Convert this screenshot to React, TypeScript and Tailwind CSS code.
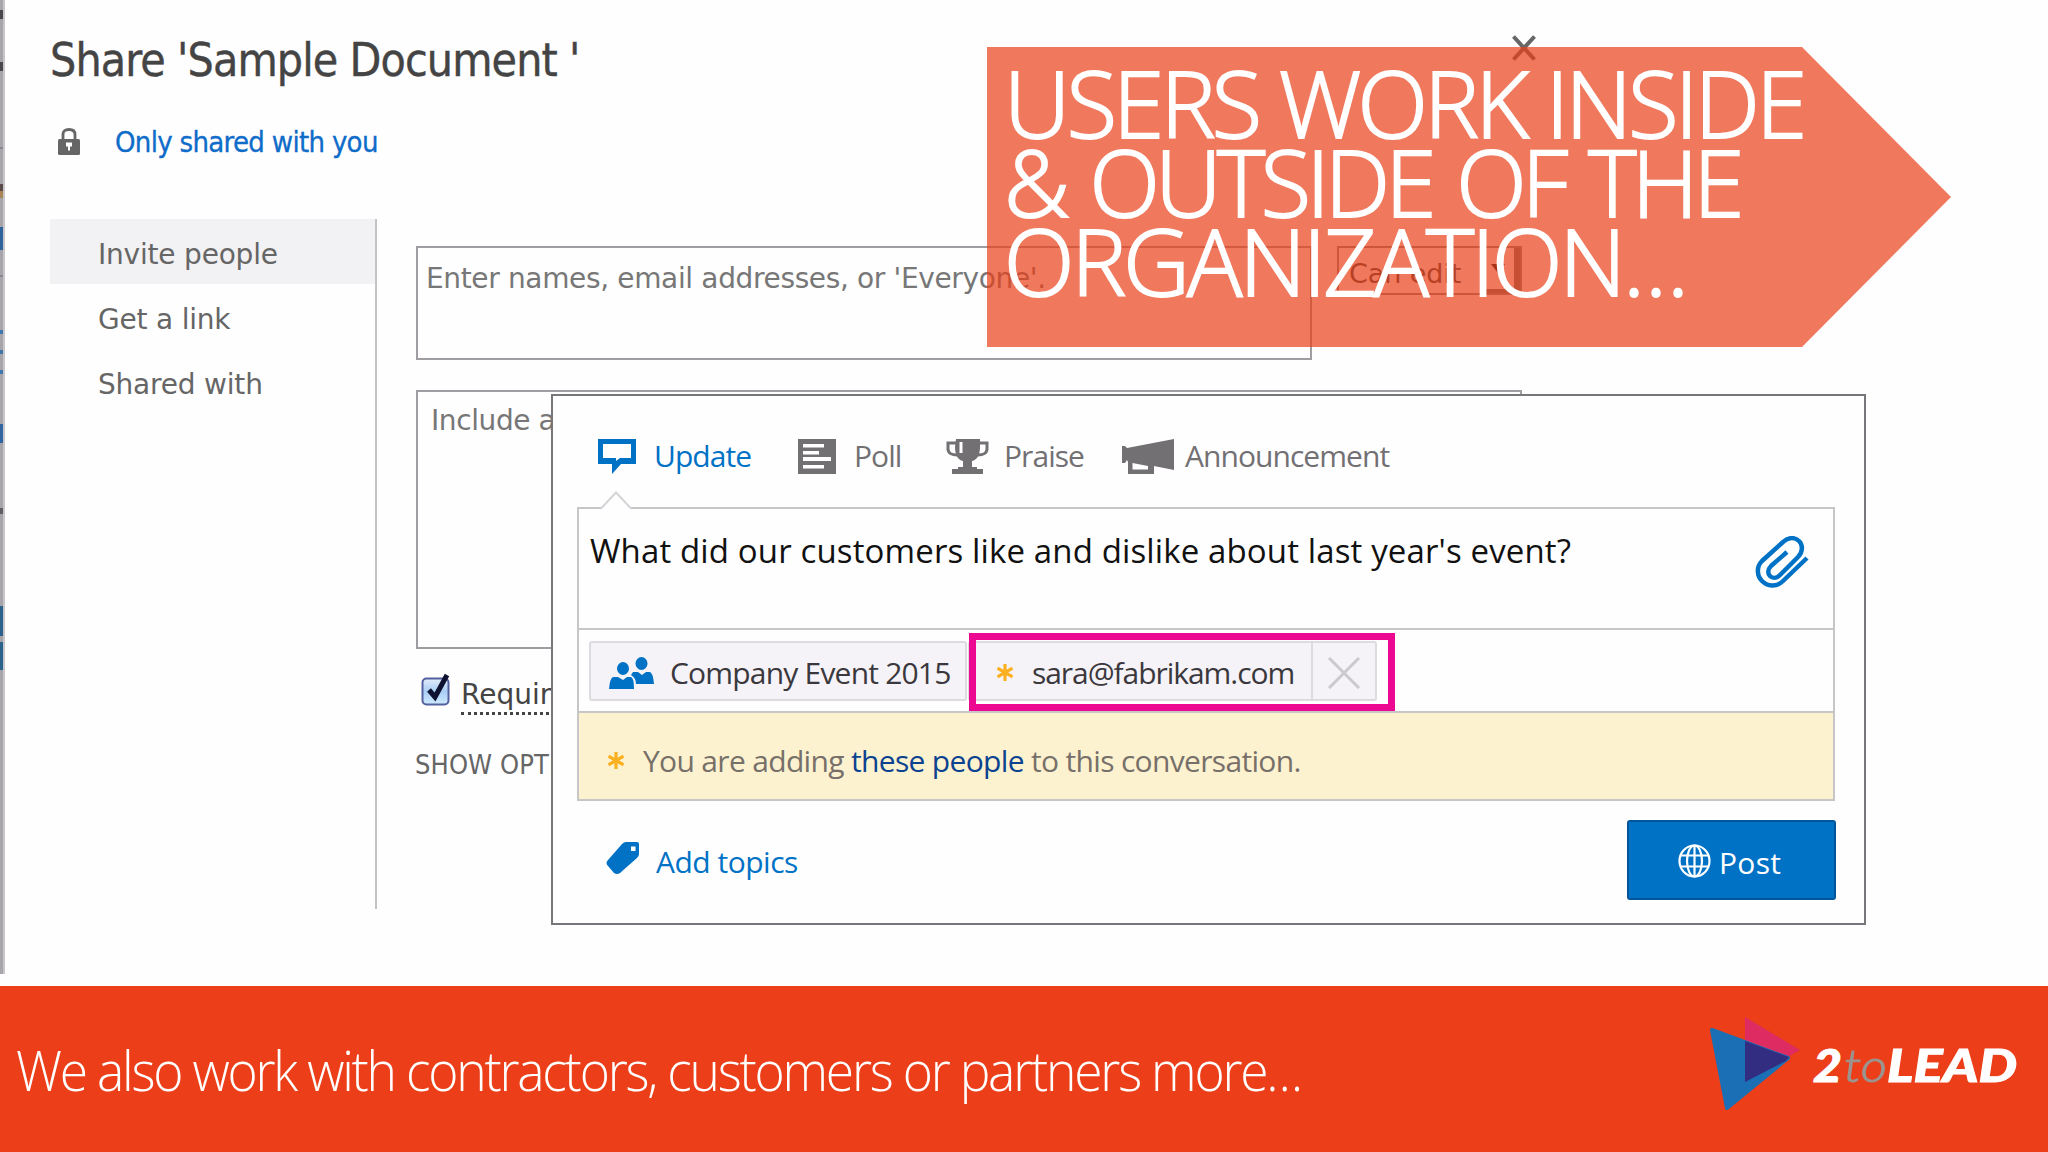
import React from 'react';

const SidebarItems = ['Invite people', 'Get a link', 'Shared with'];

const edgeMarks = [
  { y: 10, h: 9, color: '#4a474c' },
  { y: 62, h: 9, color: '#4a474c' },
  { y: 147, h: 2, color: '#8b8890' },
  { y: 184, h: 7, color: '#5c4a4a' },
  { y: 191, h: 7, color: '#a98454' },
  { y: 227, h: 23, color: '#2f639c' },
  { y: 275, h: 2, color: '#8b8890' },
  { y: 330, h: 4, color: '#3f77ad' },
  { y: 350, h: 4, color: '#3f77ad' },
  { y: 370, h: 4, color: '#3f77ad' },
  { y: 424, h: 19, color: '#2f66a0' },
  { y: 508, h: 6, color: '#605d63' },
  { y: 606, h: 30, color: '#2b628c' },
  { y: 642, h: 28, color: '#2b628c' },
];

const PageEdge = () => (
  <svg width="5" height="974" className="shrink-0">
    <rect width="3" height="974" fill="#a8a5aa" />
    <rect x="3" width="2" height="974" fill="#c9c6cb" />
    {edgeMarks.map((m) => (
      <rect key={m.y} y={m.y} width="3" height={m.h} fill={m.color} />
    ))}
  </svg>
);

const LockIcon = () => (
  <svg width="22" height="27" viewBox="0 0 22 27">
    <path d="M5 12V6.5Q5 1.5 11 1.5T17 6.5V12" fill="none" stroke="#666" strokeWidth="2.8" />
    <rect y="11" width="22" height="16" rx="1.5" fill="#666" />
    <path d="M8 14.5h6v4h-2v4h-2v-4H8z" fill="#fff" />
  </svg>
);

const CheckboxIcon = () => (
  <svg width="31" height="36" viewBox="0 0 31 36">
    <defs>
      <linearGradient id="check-fill" x1="0" y1="0" x2="0" y2="1">
        <stop offset="0" stopColor="#e3ecfb" />
        <stop offset="0.5" stopColor="#a9cdf5" />
        <stop offset="1" stopColor="#cfeaff" />
      </linearGradient>
    </defs>
    <rect x="1.5" y="6.5" width="26" height="26" rx="4" fill="url(#check-fill)" stroke="#5560a0" strokeWidth="2" />
    <path d="M8 18l6 7L26 3" fill="none" stroke="#0e1230" strokeWidth="5" />
  </svg>
);

const UpdateIcon = () => (
  <svg width="38" height="35" viewBox="0 0 38 35">
    <path d="M0 0h38v25H23L14 35V25H0zM5 5v14h13v3l4-3h11V5z" fill="#0072c6" fillRule="evenodd" />
  </svg>
);

const PollIcon = () => (
  <svg width="38" height="35" viewBox="0 0 38 35">
    <path d="M0 0h38v35H0z" fill="#737074" />
    <path d="M5 5h21v3.500H5zM5 12h16v3.500H5zM5 18h28v4H5zM5 26h21v3.500H5z" fill="#fff" />
  </svg>
);

const PraiseIcon = () => (
  <svg width="43" height="35" viewBox="0 0 43 35">
    <path d="M10 0h24v8c0 8-3 13-8 14v6h5v2h6v5H6v-5h6v-2h5v-6c-5-1-8-6-8-14z" fill="#737074" />
    <path d="M10 4H2v6c0 4 4 6 9 6M33 4h8v6c0 4-4 6-9 6" fill="none" stroke="#737074" strokeWidth="3" />
    <path d="M13.500 3h3v11h-3z" fill="#fff" />
  </svg>
);

const AnnouncementIcon = () => (
  <svg width="52" height="35" viewBox="0 0 52 35">
    <path d="M0 7h3l2 2L52 0v31l-20-4v8H6V23l-1-2-2 3H0zM10.500 24v6.500H26V27z" fill="#737074" fillRule="evenodd" />
  </svg>
);

const PaperclipIcon = () => (
  <svg width="54" height="52" viewBox="0 0 54 52" fill="none" stroke="#0072c6" strokeWidth="4.500">
    <path d="M52 22L28 45C21 52 12 50 7 45S1 31 7 25L28 6C33 1 40 1 44 5s4 11-1 16L25 39C21 43 17 42 15 40s-3-6 1-10L32 16" />
  </svg>
);

const PeopleIcon = () => (
  <svg width="46" height="32" viewBox="0 0 46 32" fill="#0072c6">
    <ellipse cx="32.500" cy="6.500" rx="6" ry="6.500" />
    <path d="M24 15h5l4 3 4-3h4q3 1 4 12H27q0-6-5-9z" />
    <ellipse cx="14" cy="11.500" rx="6" ry="6.500" />
    <path d="M4 20h5l5 3 4-3h4q3 1 3 12H0q1-11 4-12z" />
  </svg>
);

const StarIcon = () => (
  <svg width="16" height="17" viewBox="0 0 16 17">
    <path d="M8 0v17M0.500 4.200l15 8.600M0.500 12.800l15-8.600" stroke="#fbb11f" strokeWidth="3.200" />
  </svg>
);

const TagIcon = () => (
  <svg width="34" height="33" viewBox="0 0 34 33">
    <path d="M20 0h11q2 0 2 2v10q0 2-2 4L14 31q-3 2-6 0l-6-7q-3-3 0-6L16 2q2-2 4-2zM25 4.500v4.500h4.500V4.500z" fill="#0072c6" fillRule="evenodd" />
  </svg>
);

const GlobeIcon = () => (
  <svg width="33" height="34" viewBox="0 0 33 34" fill="none" stroke="#fff" strokeWidth="2.200">
    <ellipse cx="16.500" cy="17" rx="15" ry="15.500" />
    <ellipse cx="16.500" cy="17" rx="7.500" ry="15.500" />
    <path d="M16.500 1.500v31M3 11.500h27M3 22.500h27" />
  </svg>
);

const tabs = [
  { label: 'Update', icon: <UpdateIcon />, style: 'w-[200px] text-[#0072c6]', gap: 'ml-[18px]' },
  { label: 'Poll', icon: <PollIcon />, style: 'w-[148px] text-[#737074]', gap: 'ml-[18px]' },
  { label: 'Praise', icon: <PraiseIcon />, style: 'w-[176px] text-[#737074]', gap: 'ml-[15px]' },
  { label: 'Announcement', icon: <AnnouncementIcon />, style: 'text-[#737074]', gap: 'ml-[11px]' },
];

const ShareDialog = () => (
  <div className="flex grow flex-col pl-[45px] font-['DejaVu_Sans',sans-serif]">
    <div className="flex pt-[31px] font-['DejaVu_Sans_Condensed','DejaVu_Sans',sans-serif]">
      <h1 className="w-[1462px] text-[46px] leading-[59px] tracking-[-0.9px] text-[#444] [-webkit-text-stroke:0.4px_#444]">
        Share 'Sample Document '
      </h1>
      <svg width="24" height="26" viewBox="0 0 24 26" className="mt-[4px]">
        <path d="M1.500 1.500l21 23M22.500 1.500l-21 23" stroke="#666" strokeWidth="4" />
      </svg>
    </div>

    <div className="mt-[31px] flex h-10 items-center pl-[8px]">
      <LockIcon />
      <a className="ml-[35px] pt-px font-['DejaVu_Sans_Condensed','DejaVu_Sans',sans-serif] text-[29px] leading-[40px] tracking-[-0.7px] text-[#0f6cc9] [-webkit-text-stroke:0.3px_#0f6cc9]">
        Only shared with you
      </a>
    </div>

    <div className="mt-[58px] flex">
      <nav className="h-[690px] w-[327px] shrink-0 border-r-2 border-[#c6c3c8] text-[28px] tracking-[-0.2px] text-[#666]">
        {SidebarItems.map((item, index) => (
          <div key={item} className={`h-[65px] pl-[48px] leading-[71px] ${index === 0 ? 'bg-[#f2f1f3]' : ''}`}>
            {item}
          </div>
        ))}
      </nav>

      <div className="ml-[39px] pt-[27px] text-[28px] tracking-[-0.4px] text-[#777]">
        <div className="flex gap-[25px]">
          <div className="h-[114px] w-[896px] border-2 border-[#a09da2] pt-[11px] pl-[8px] leading-[40px] tracking-[-0.35px]">
            Enter names, email addresses, or 'Everyone'.
          </div>
          <div className="flex h-[49px] w-[185px] border-2 border-[#8a8a8a] text-[#444]">
            <span className="w-[142px] pl-[10px] text-[27px] leading-[52px] tracking-[-0.1px] whitespace-nowrap">Can edit</span>
            <span className="flex grow items-center justify-center border-r-[6px] border-b-4 border-[#777]">
              <svg width="14" height="9" className="shrink-0">
                <path d="M0 0h14L7 9z" fill="#111" />
              </svg>
            </span>
          </div>
        </div>

        <div className="mt-[30px] h-[259px] w-[1106px] border-2 border-[#a09da2] pt-[9px] pl-[13px] leading-[40px]">
          Include a personal message with this invitation.
        </div>

        <div className="mt-[23px] flex h-[41px] items-start pl-[5px] text-[#444]">
          <CheckboxIcon />
          <span className="mt-[6px] ml-[9px] border-b-[3px] border-dotted border-[#444] leading-[34px] tracking-[0px]">
            Require sign-in
          </span>
        </div>

        <div className="mt-[32px] -ml-px font-['DejaVu_Sans_Condensed','DejaVu_Sans',sans-serif] text-[27px] leading-[40px] tracking-[0.1px] text-[#666]">
          SHOW OPTIONS
        </div>
      </div>
    </div>
  </div>
);

const PostDialog = () => (
  <div className="absolute top-[394px] left-[551px] h-[531px] w-[1315px] border-2 border-[#79767b] bg-[#fefefe] pt-[43px] pr-[29px] pl-[24px] font-['Open_Sans','Noto_Sans',sans-serif] text-[30px] tracking-[-0.95px]">
    <div className="flex h-[35px] items-center pl-[21px]">
      {tabs.map((tab) => (
        <div key={tab.label} className={`flex items-center ${tab.style}`}>
          {tab.icon}
          <span className={`pb-px leading-[32px] ${tab.gap}`}>{tab.label}</span>
        </div>
      ))}
    </div>

    <div className="relative mt-[33px] border-2 border-[#c8c5c9]">
      {/* Pointer below the active tab */}
      <svg width="32" height="18" viewBox="0 0 32 18" className="absolute -top-[18px] left-[21px]">
        <path d="M1 17L16 1l15 16v1H1z" fill="#fefefe" />
        <path d="M1 17.500L16 1.500l15 16" fill="none" stroke="#d6d3d8" strokeWidth="2" />
      </svg>

      <div className="flex h-[121px] border-b-2 border-[#c8c5c9] pt-[20px] pr-[24px] pl-[11px]">
        <p className="grow text-[33px] leading-[44px] tracking-[0.13px] text-[#111]">
          What did our customers like and dislike about last year's event?
        </p>
        <div className="pt-[7px]">
          <PaperclipIcon />
        </div>
      </div>

      <div className="relative flex h-[83px] border-b-2 border-[#c8c5c9] pt-[11px] pl-[10px] text-[#3b383d]">
        <div className="flex h-[60px] w-[378px] items-center rounded-[3px] border-2 border-[#dedbe0] bg-[#f5f3f7] pl-[18px]">
          <div className="pt-[3px]">
            <PeopleIcon />
          </div>
          <span className="mt-[2px] ml-[15px] tracking-[-0.8px]">Company Event 2015</span>
        </div>
        <div className="ml-px flex h-[60px] w-[409px] items-center rounded-[3px] border-2 border-[#dedbe0] bg-[#f5f3f7] pl-[27px]">
          <div className="pt-[3px]">
            <StarIcon />
          </div>
          <span className="mt-[2px] ml-[19px] w-[280px] tracking-[-1.05px]">sara@fabrikam.com</span>
          <span className="flex h-full w-[64px] shrink-0 items-center justify-center border-l-2 border-[#dedbe0] pt-[3px]">
            <svg width="32" height="32" viewBox="0 0 32 32">
              <path d="M1 1l30 30M31 1L1 31" stroke="#cbc9cc" strokeWidth="3" />
            </svg>
          </span>
        </div>
        <div className="absolute top-[3px] left-[390px] h-[78px] w-[426px] border-[7px] border-[#ec0890]"></div>
      </div>

      <div className="flex h-[86px] items-center bg-[#fdf2cf] pt-[8px] pl-[29px] text-[#77706a]">
        <StarIcon />
        <p className="ml-[19px] tracking-[-0.67px]">
          You are adding <span className="text-[#0b4390]">these people</span> to this conversation.
        </p>
      </div>
    </div>

    <div className="mt-[19px] flex h-[80px] items-center pl-[29px]">
      <div className="pb-[4px]">
        <TagIcon />
      </div>
      <a className="mt-[2px] ml-[16px] tracking-[-0.5px] text-[#0072c6]">Add topics</a>
      <button className="-mr-px ml-auto flex h-[80px] w-[209px] items-center rounded-[3px] border-2 border-[#00559b] bg-[#0072c6] pl-[49px] text-white">
        <div className="pt-[2px]">
          <GlobeIcon />
        </div>
        <span className="mt-[4px] ml-[8px] tracking-[0.3px]">Post</span>
      </button>
    </div>
  </div>
);

const Callout = () => (
  <div className="absolute top-[47px] left-[987px] h-[300px] w-[964px] bg-[#e93f17]/70 pt-[16px] pl-[17px] font-['Open_Sans','Noto_Sans',sans-serif] text-[92px] leading-[79px] font-light whitespace-nowrap text-white [-webkit-text-stroke:2px_white] [clip-path:polygon(0_0,815px_0,100%_50%,815px_100%,0_100%)]">
    <p className="tracking-[-3.5px]">
      USERS WORK INSIDE
      <br />
      <span className="tracking-[-4.5px] [word-spacing:5px]">&amp; OUTSIDE OF THE</span>
      <br />
      <span className="tracking-[-2.8px]">ORGANIZATION…</span>
    </p>
  </div>
);

const Logo = () => (
  <svg width="312" height="100" viewBox="0 0 312 100" className="font-['Lato',sans-serif]">
    <path d="M39 3L94 36 39 68z" fill="#de2c62" />
    <path d="M6 16L82 44 21 94z" fill="#1b6fb5" stroke="#1b6fb5" strokeWidth="4" strokeLinejoin="round" />
    <path d="M39 27L83 43 80 47 39 68z" fill="#332d82" />
    <text x="107" y="68" fontSize="46" textLength="29" lengthAdjust="spacingAndGlyphs" className="fill-white stroke-white font-black italic">2</text>
    <text x="138" y="68" fontSize="46" textLength="43" lengthAdjust="spacingAndGlyphs" className="fill-[#9c9490] stroke-[#9c9490] font-light italic">to</text>
    <text x="181" y="68" fontSize="46" textLength="130" lengthAdjust="spacingAndGlyphs" className="fill-white stroke-white font-black italic">LEAD</text>
  </svg>
);

export default function App() {
  return (
    <div className="relative flex h-[1152px] w-[2048px] flex-col overflow-hidden bg-[#fefefe]">
      <div className="flex h-[986px]">
        <PageEdge />
        <ShareDialog />
      </div>
      <PostDialog />
      <Callout />

      <footer className="flex h-[166px] justify-between bg-[#ec3e19] pt-[28px] pr-[30px] pl-[16px]">
        <p className="mt-[15px] origin-left scale-x-[0.92] font-['Open_Sans','Noto_Sans',sans-serif] text-[56px] leading-[80px] font-light tracking-[-2.41px] whitespace-nowrap text-white">
          We also work with contractors, customers or partners more…
        </p>
        <Logo />
      </footer>
    </div>
  );
}
